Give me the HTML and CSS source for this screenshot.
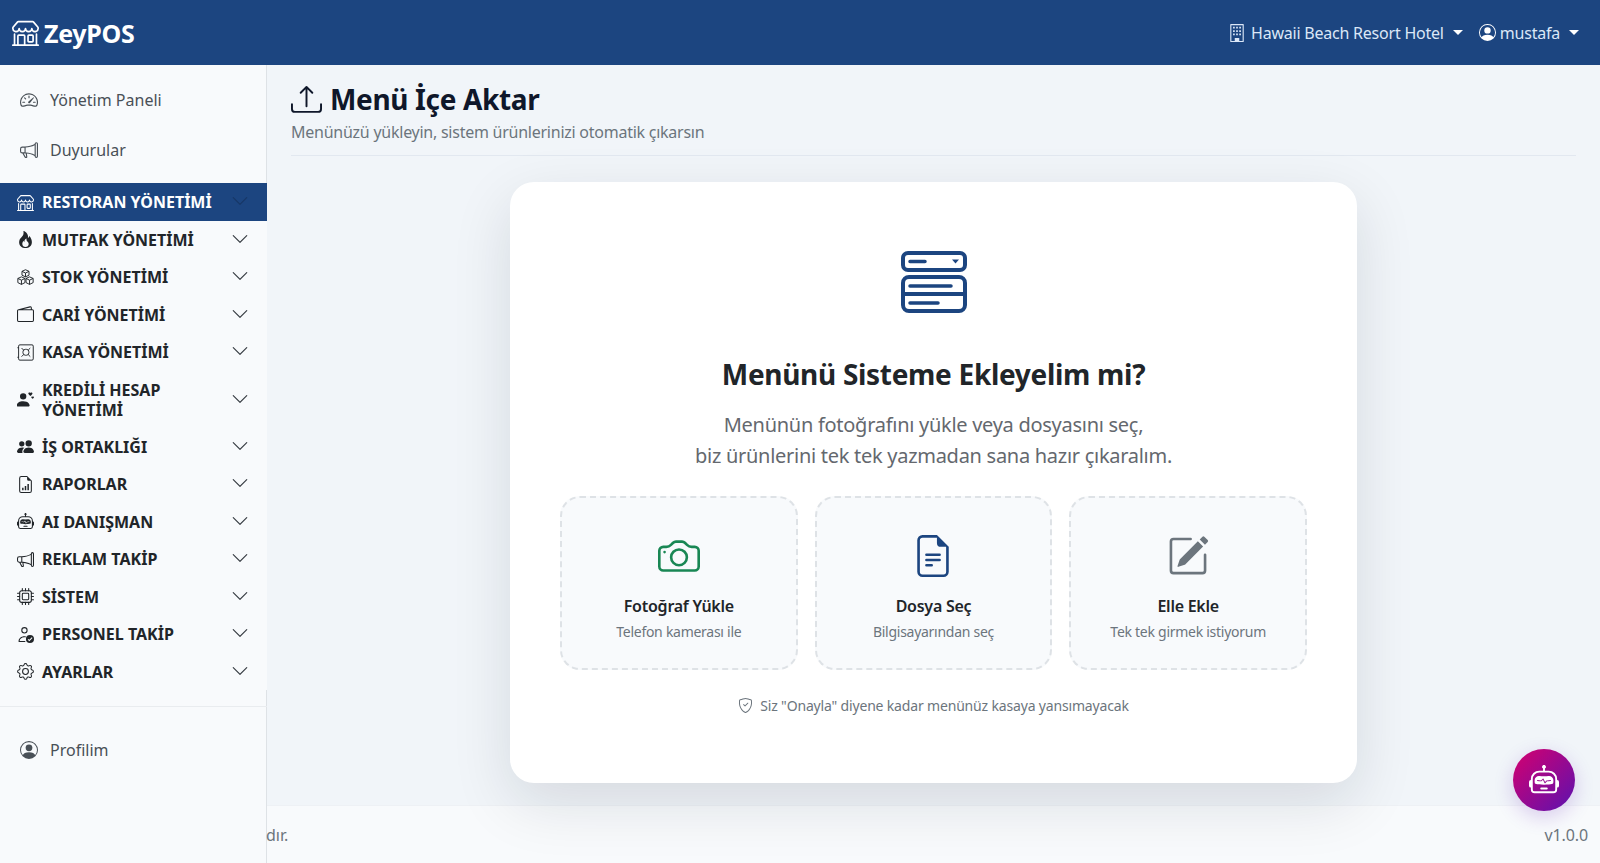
FILE: index.html
```html
<!DOCTYPE html>
<html lang="tr">
<head>
  <meta charset="UTF-8" />
  <meta name="viewport" content="width=device-width, initial-scale=1.0"/>
  <title>ZeyPOS - Menü İçe Aktar</title>
  <link rel="stylesheet" href="styles.css">
</head>
<body>
  <!-- Icon sprite -->
  <svg class="sprite" xmlns="http://www.w3.org/2000/svg">
    <symbol id="i-shop" viewBox="0 0 16 16"><path d="M2.97 1.35A1 1 0 0 1 3.73 1h8.54a1 1 0 0 1 .76.35l2.609 3.044A1.5 1.5 0 0 1 16 5.37v.255a2.375 2.375 0 0 1-4.25 1.458A2.371 2.371 0 0 1 9.875 8 2.37 2.37 0 0 1 8 7.083 2.37 2.37 0 0 1 6.125 8a2.37 2.37 0 0 1-1.875-.917A2.375 2.375 0 0 1 0 5.625V5.37a1.5 1.5 0 0 1 .361-.976l2.61-3.045zm1.78 4.275a1.375 1.375 0 0 0 2.75 0 .5.5 0 0 1 1 0 1.375 1.375 0 0 0 2.75 0 .5.5 0 0 1 1 0 1.375 1.375 0 1 0 2.75 0V5.37a.5.5 0 0 0-.12-.325L12.27 2H3.73L1.12 5.045A.5.5 0 0 0 1 5.37v.255a1.375 1.375 0 0 0 2.75 0 .5.5 0 0 1 1 0zM1.5 8.5A.5.5 0 0 1 2 9v6h1v-5a1 1 0 0 1 1-1h3a1 1 0 0 1 1 1v5h6V9a.5.5 0 0 1 1 0v6h.5a.5.5 0 0 1 0 1H.5a.5.5 0 0 1 0-1H1V9a.5.5 0 0 1 .5-.5zM4 15h3v-5H4v5zm5-5a1 1 0 0 1 1-1h2a1 1 0 0 1 1 1v3a1 1 0 0 1-1 1h-2a1 1 0 0 1-1-1v-3zm3 0h-2v3h2v-3z"/></symbol>
    <symbol id="i-speed" viewBox="0 0 16 16"><path d="M8 4a.5.5 0 0 1 .5.5V6a.5.5 0 0 1-1 0V4.5A.5.5 0 0 1 8 4zM3.732 5.732a.5.5 0 0 1 .707 0l.915.914a.5.5 0 1 1-.708.708l-.914-.915a.5.5 0 0 1 0-.707zM2 10a.5.5 0 0 1 .5-.5h1.586a.5.5 0 0 1 0 1H2.5A.5.5 0 0 1 2 10zm9.5 0a.5.5 0 0 1 .5-.5h1.5a.5.5 0 0 1 0 1H12a.5.5 0 0 1-.5-.5zm.754-4.246a.389.389 0 0 0-.527-.02L7.547 9.31a.91.91 0 1 0 1.302 1.258l3.434-4.297a.389.389 0 0 0-.029-.518z"/><path fill-rule="evenodd" d="M0 10a8 8 0 1 1 15.547 2.661c-.442 1.253-1.845 1.602-2.932 1.25C11.309 13.488 9.475 13 8 13c-1.474 0-3.31.488-4.615.911-1.087.352-2.49.003-2.932-1.25A7.988 7.988 0 0 1 0 10zm8-7a7 7 0 0 0-6.603 9.329c.203.575.923.876 1.68.63C4.397 12.533 6.358 12 8 12s3.604.532 4.923.96c.757.245 1.477-.056 1.68-.631A7 7 0 0 0 8 3z"/></symbol>
    <symbol id="i-megaphone" viewBox="0 0 16 16"><path d="M13 2.5a1.5 1.5 0 0 1 3 0v11a1.5 1.5 0 0 1-3 0v-.214c-2.162-1.241-4.49-1.843-6.912-2.083l.405 2.712A1 1 0 0 1 5.51 15.1h-.548a1 1 0 0 1-.916-.599l-1.85-3.49a68.14 68.14 0 0 0-.202-.003A2.014 2.014 0 0 1 0 9V7a2.02 2.02 0 0 1 1.992-2.013 74.663 74.663 0 0 0 2.483-.075c3.043-.154 6.148-.849 8.525-2.199V2.5zm1 0v11a.5.5 0 0 0 1 0v-11a.5.5 0 0 0-1 0zm-1 1.35c-2.344 1.205-5.209 1.842-8 2.033v4.233c.18.01.359.022.537.036 2.568.189 5.093.744 7.463 1.993V3.85zm-9 6.215v-4.13a95.09 95.09 0 0 1-1.992.052A1.02 1.02 0 0 0 1 7v2c0 .55.448 1.002 1.006 1.009A60.49 60.49 0 0 1 4 10.065zm-.657.975 1.609 3.037.01.024h.548l-.002-.014-.443-2.966a68.019 68.019 0 0 0-1.722-.082z"/></symbol>
    <symbol id="i-fire" viewBox="0 0 16 16"><path d="M8 16c3.314 0 6-2 6-5.5 0-1.5-.5-4-2.5-6 .25 1.5-1.25 2-1.25 2C11 4 9 .5 6 0c.357 2 .5 4-2 6-1.25 1-2 2.729-2 4.5C2 14 4.686 16 8 16Zm0-1c-1.657 0-3-1-3-2.75 0-.75.25-2 1.25-3C6.125 10 7 10.5 7 10.5c-.375-1.25.5-3.25 2-3.5-.179 1-.25 2 1 3 .625.5 1 1.364 1 2.25C11 14 9.657 15 8 15Z"/></symbol>
    <symbol id="i-boxes" viewBox="0 0 16 16"><g fill="none" stroke="currentColor" stroke-width=".9" stroke-linejoin="round"><path d="M8 .7l3.3 1.5v3.6L8 7.4 4.7 5.8V2.2zM4.7 2.2L8 3.8l3.3-1.6M8 3.8v3.6"/><path d="M4.2 7.4l3.3 1.5v3.9l-3.3 1.7L.8 12.8V8.9zM.8 8.9l3.4 1.6 3.3-1.6M4.2 10.5v4"/><path d="M11.8 7.4l3.4 1.5v3.9l-3.4 1.7-3.3-1.7V8.9zM8.5 8.9l3.3 1.6 3.4-1.6M11.8 10.5v4"/></g></symbol>
    <symbol id="i-wallet" viewBox="0 0 16 16"><path d="M12.136.326A1.5 1.5 0 0 1 14 1.78V3h.5A1.5 1.5 0 0 1 16 4.5v9a1.5 1.5 0 0 1-1.5 1.5h-13A1.5 1.5 0 0 1 0 13.5v-9a1.5 1.5 0 0 1 1.432-1.499L12.136.326zM5.562 3H13V1.78a.5.5 0 0 0-.621-.484L5.562 3zM1.5 4a.5.5 0 0 0-.5.5v9a.5.5 0 0 0 .5.5h13a.5.5 0 0 0 .5-.5v-9a.5.5 0 0 0-.5-.5h-13z"/></symbol>
    <symbol id="i-safe" viewBox="0 0 16 16"><g fill="none" stroke="currentColor" stroke-width=".9" stroke-linejoin="round"><rect x="1.5" y=".8" width="13.8" height="14.4" rx="1.2"/><path d="M.4 3.5h1.1M.4 12.5h1.1"/><rect x="5.6" y="5" width="5.6" height="5.6" rx="2.4"/><path d="M4.3 3.8l1.9 1.9M12.5 3.8l-1.9 1.9M4.3 11.9l1.9-1.9M12.5 11.9l-1.9-1.9"/></g></symbol>
    <symbol id="i-person-heart" viewBox="0 0 16 16"><path d="M5.8 8a3 3 0 1 0 0-6 3 3 0 0 0 0 6zM.6 14.5s-.9 0-.9-.9c0-1 1-4 6.1-4s6.1 3 6.1 4c0 .9-.9.9-.9.9z"/><path d="M12.6 1.8c.9-.9 2.4-.1 1.8 1.1-.3.6-1 1.1-1.800 1.700-.8-.6-1.500-1.100-1.800-1.700-.6-1.200.9-2 1.800-1.100zM14.700 5.400c.6-.6 1.600-.1 1.200.8-.2.400-.7.800-1.200 1.100-.5-.3-1-.7-1.200-1.100-.4-.9.6-1.400 1.200-.8z"/></symbol>
    <symbol id="i-people" viewBox="0 0 16 16"><path d="M7 14s-1 0-1-1 1-4 5-4 5 3 5 4-1 1-1 1H7Zm4-6a3 3 0 1 0 0-6 3 3 0 0 0 0 6Zm-5.784 6A2.238 2.238 0 0 1 5 13c0-1.355.68-2.75 1.936-3.72A6.325 6.325 0 0 0 5 9c-4 0-5 3-5 4s1 1 1 1h4.216ZM4.5 8a2.5 2.5 0 1 0 0-5 2.5 2.5 0 0 0 0 5Z"/></symbol>
    <symbol id="i-report" viewBox="0 0 16 16"><path fill-rule="evenodd" d="M9.5 0H4a2 2 0 0 0-2 2v12a2 2 0 0 0 2 2h8a2 2 0 0 0 2-2V4.5L9.5 0zm0 1v2A1.5 1.5 0 0 0 11 4.5h2V14a1 1 0 0 1-1 1H4a1 1 0 0 1-1-1V2a1 1 0 0 1 1-1h5.5z"/><path d="M4.8 11h1.400v2.500H4.800zM7.300 9.500h1.400v4H7.300zM9.800 7.500h1.400v6H9.800z"/></symbol>
    <symbol id="i-robot" viewBox="0 0 16 16"><path d="M6 12.5a.5.5 0 0 1 .5-.5h3a.5.5 0 0 1 0 1h-3a.5.5 0 0 1-.5-.5ZM3 8.062C3 6.76 4.235 5.765 5.53 5.886a26.58 26.58 0 0 0 4.94 0C11.765 5.765 13 6.76 13 8.062v1.157a.933.933 0 0 1-.765.935c-.845.147-2.34.346-4.235.346-1.895 0-3.39-.2-4.235-.346A.933.933 0 0 1 3 9.219V8.062Zm4.542-.827a.25.25 0 0 0-.217.068l-.92.9a24.767 24.767 0 0 1-1.871-.183.25.25 0 0 0-.068.495c.55.076 1.232.149 2.02.193a.25.25 0 0 0 .189-.071l.754-.736.847 1.71a.25.25 0 0 0 .404.062l.932-.97a25.286 25.286 0 0 0 1.922-.188.25.25 0 0 0-.068-.495c-.538.074-1.207.145-1.98.189a.25.25 0 0 0-.166.076l-.754.785-.842-1.7a.25.25 0 0 0-.182-.135Z"/><path d="M8.5 1.866a1 1 0 1 0-1 0V3h-2A4.5 4.5 0 0 0 1 7.5V8a1 1 0 0 0-1 1v2a1 1 0 0 0 1 1v1a2 2 0 0 0 2 2h10a2 2 0 0 0 2-2v-1a1 1 0 0 0 1-1V9a1 1 0 0 0-1-1v-.5A4.5 4.5 0 0 0 10.5 3h-2V1.866ZM14 7.5V13a1 1 0 0 1-1 1H3a1 1 0 0 1-1-1V7.5A3.5 3.5 0 0 1 5.5 4h5A3.5 3.5 0 0 1 14 7.5Z"/></symbol>
    <symbol id="i-cpu" viewBox="0 0 16 16"><g fill="none" stroke="currentColor"><rect x="2.5" y="2.5" width="11" height="11" rx="2"/><rect x="5" y="5" width="6" height="6" rx=".8"/><path stroke-linecap="round" d="M5 .5v2M8 .5v2M11 .5v2M5 13.5v2M8 13.5v2M11 13.5v2M.5 5h2M.5 8h2M.5 11h2M13.5 5h2M13.5 8h2M13.5 11h2"/></g></symbol>
    <symbol id="i-person-check" viewBox="0 0 16 16"><path fill-rule="evenodd" d="M7 1a3 3 0 1 1 0 6 3 3 0 0 1 0-6zm0 1a2 2 0 1 0 0 4 2 2 0 0 0 0-4zM1.5 14c0-2.2 2.3-4.4 5.5-4.4.5 0 1 .1 1.4.2l-.3 1C7.7 10.7 7.4 10.6 7 10.6c-2.7 0-4.5 1.8-4.5 3.400h5.300v1H1.500z"/><circle cx="12.2" cy="12.2" r="3.8"/><path fill="#f8fafc" d="M13.9 10.7l.7.7-3 3-1.500-1.500.7-.7.8.8z"/></symbol>
    <symbol id="i-gear" viewBox="0 0 16 16"><path d="M8 4.754a3.246 3.246 0 1 0 0 6.492 3.246 3.246 0 0 0 0-6.492zM5.754 8a2.246 2.246 0 1 1 4.492 0 2.246 2.246 0 0 1-4.492 0z"/><path fill="none" stroke="currentColor" stroke-width=".95" d="M9.3 1.49c-.38-1.29-2.22-1.29-2.6 0l-.09.32a1.37 1.37 0 0 1-1.97.81l-.29-.16c-1.18-.64-2.48.65-1.84 1.84l.16.29a1.37 1.37 0 0 1-.81 1.97l-.32.09c-1.29.38-1.29 2.22 0 2.6l.32.09a1.37 1.37 0 0 1 .81 1.97l-.16.29c-.64 1.19.65 2.48 1.84 1.84l.29-.16a1.37 1.37 0 0 1 1.97.81l.09.32c.38 1.29 2.22 1.29 2.6 0l.09-.32a1.37 1.37 0 0 1 1.97-.81l.29.16c1.19.64 2.48-.65 1.84-1.84l-.16-.29a1.37 1.37 0 0 1 .81-1.97l.32-.09c1.29-.38 1.29-2.22 0-2.6l-.32-.09a1.37 1.37 0 0 1-.81-1.97l.16-.29c.64-1.19-.65-2.48-1.84-1.84l-.29.16a1.37 1.37 0 0 1-1.97-.81z"/></symbol>
    <symbol id="i-person-circle" viewBox="0 0 16 16"><path d="M11 6a3 3 0 1 1-6 0 3 3 0 0 1 6 0z"/><path fill-rule="evenodd" d="M0 8a8 8 0 1 1 16 0A8 8 0 0 1 0 8zm8-7a7 7 0 0 0-5.468 11.37C3.242 11.226 4.805 10 8 10s4.757 1.225 5.468 2.37A7 7 0 0 0 8 1z"/></symbol>
    <symbol id="i-building" viewBox="0 0 16 16"><path fill-rule="evenodd" d="M2.5 0h11a.5.5 0 0 1 .5.5v15a.5.5 0 0 1-.5.5h-11a.5.5 0 0 1-.5-.5V.5a.5.5 0 0 1 .5-.5zM3 1v14h3v-2.5h4V15h3V1z"/><path d="M4.5 2.5H6V4H4.5zM7.25 2.5h1.5V4h-1.5zM10 2.5h1.5V4H10zM4.5 5.5H6V7H4.5zM7.25 5.5h1.5V7h-1.5zM10 5.5h1.5V7H10zM4.5 8.5H6V10H4.5zM7.25 8.5h1.5V10h-1.5zM10 8.5h1.5V10H10z"/></symbol>
    <symbol id="i-chevron" viewBox="0 0 16 16"><path fill-rule="evenodd" d="M1.646 4.646a.5.5 0 0 1 .708 0L8 10.293l5.646-5.647a.5.5 0 0 1 .708.708l-6 6a.5.5 0 0 1-.708 0l-6-6a.5.5 0 0 1 0-.708z"/></symbol>
  </svg>

  <!-- Top bar -->
  <header class="topbar">
    <a class="brand"><svg class="brand-icon"><use href="#i-shop"/></svg>ZeyPOS</a>
    <div class="topbar-right">
      <a class="top-link"><svg class="top-icon"><use href="#i-building"/></svg>Hawaii Beach Resort Hotel<span class="caret"></span></a>
      <a class="top-link"><svg class="top-icon user"><use href="#i-person-circle"/></svg>mustafa<span class="caret"></span></a>
    </div>
  </header>

  <div class="layout">
    <!-- Sidebar -->
    <aside class="sidebar">
      <a class="side-link"><svg class="side-icon"><use href="#i-speed"/></svg>Yönetim Paneli</a>
      <a class="side-link"><svg class="side-icon"><use href="#i-megaphone"/></svg>Duyurular</a>

      <nav class="side-groups">
        <a class="group active"><svg class="group-icon"><use href="#i-shop"/></svg><span>RESTORAN YÖNETİMİ</span><svg class="chevron"><use href="#i-chevron"/></svg></a>
        <a class="group"><svg class="group-icon"><use href="#i-fire"/></svg><span>MUTFAK YÖNETİMİ</span><svg class="chevron"><use href="#i-chevron"/></svg></a>
        <a class="group"><svg class="group-icon"><use href="#i-boxes"/></svg><span>STOK YÖNETİMİ</span><svg class="chevron"><use href="#i-chevron"/></svg></a>
        <a class="group"><svg class="group-icon"><use href="#i-wallet"/></svg><span>CARİ YÖNETİMİ</span><svg class="chevron"><use href="#i-chevron"/></svg></a>
        <a class="group"><svg class="group-icon"><use href="#i-safe"/></svg><span>KASA YÖNETİMİ</span><svg class="chevron"><use href="#i-chevron"/></svg></a>
        <a class="group"><svg class="group-icon"><use href="#i-person-heart"/></svg><span>KREDİLİ HESAP YÖNETİMİ</span><svg class="chevron"><use href="#i-chevron"/></svg></a>
        <a class="group"><svg class="group-icon"><use href="#i-people"/></svg><span>İŞ ORTAKLIĞI</span><svg class="chevron"><use href="#i-chevron"/></svg></a>
        <a class="group"><svg class="group-icon"><use href="#i-report"/></svg><span>RAPORLAR</span><svg class="chevron"><use href="#i-chevron"/></svg></a>
        <a class="group"><svg class="group-icon"><use href="#i-robot"/></svg><span>AI DANIŞMAN</span><svg class="chevron"><use href="#i-chevron"/></svg></a>
        <a class="group"><svg class="group-icon"><use href="#i-megaphone"/></svg><span>REKLAM TAKİP</span><svg class="chevron"><use href="#i-chevron"/></svg></a>
        <a class="group"><svg class="group-icon"><use href="#i-cpu"/></svg><span>SİSTEM</span><svg class="chevron"><use href="#i-chevron"/></svg></a>
        <a class="group"><svg class="group-icon"><use href="#i-person-check"/></svg><span>PERSONEL TAKİP</span><svg class="chevron"><use href="#i-chevron"/></svg></a>
        <a class="group"><svg class="group-icon"><use href="#i-gear"/></svg><span>AYARLAR</span><svg class="chevron"><use href="#i-chevron"/></svg></a>
      </nav>

      <div class="side-bottom">
        <a class="side-link"><svg class="side-icon"><use href="#i-person-circle"/></svg>Profilim</a>
      </div>
    </aside>

    <!-- Main content -->
    <main class="main">
      <div class="content">
        <div class="page-head">
          <h1>
            <svg class="title-icon" viewBox="0 0 16 16"><path d="M.5 9.9a.5.5 0 0 1 .5.5v2.5a1 1 0 0 0 1 1h12a1 1 0 0 0 1-1v-2.5a.5.5 0 0 1 1 0v2.5a2 2 0 0 1-2 2H2a2 2 0 0 1-2-2v-2.5a.5.5 0 0 1 .5-.5z"/><path d="M7.646 1.146a.5.5 0 0 1 .708 0l3 3a.5.5 0 0 1-.708.708L8.5 2.707V11.5a.5.5 0 0 1-1 0V2.707L5.354 4.854a.5.5 0 1 1-.708-.708l3-3z"/></svg>
            Menü İçe Aktar
          </h1>
          <p class="page-sub">Menünüzü yükleyin, sistem ürünlerinizi otomatik çıkarsın</p>
        </div>

        <section class="import-card">
          <svg class="hero-icon" viewBox="0 0 66 62">
            <rect x="2" y="2" width="62" height="17" rx="5"/>
            <rect x="2" y="26" width="62" height="34" rx="6"/>
            <path d="M2 43h62"/>
            <path class="hero-lines" d="M9 10.5h15M9 35h41M9 52h28"/>
            <path class="hero-caret" d="M51 8.5h7l-3.5 4z"/>
          </svg>
          <h2>Menünü Sisteme Ekleyelim mi?</h2>
          <p class="lead">Menünün fotoğrafını yükle veya dosyasını seç,<br>biz ürünlerini tek tek yazmadan sana hazır çıkaralım.</p>

          <div class="options">
            <a class="option">
              <svg class="option-icon green" viewBox="0 0 16 16"><path d="M15 12a1 1 0 0 1-1 1H2a1 1 0 0 1-1-1V6a1 1 0 0 1 1-1h1.172a3 3 0 0 0 2.12-.879l.83-.828A1 1 0 0 1 6.827 3h2.344a1 1 0 0 1 .707.293l.828.828A3 3 0 0 0 12.828 5H14a1 1 0 0 1 1 1v6zM2 4a2 2 0 0 0-2 2v6a2 2 0 0 0 2 2h12a2 2 0 0 0 2-2V6a2 2 0 0 0-2-2h-1.172a2 2 0 0 1-1.414-.586l-.828-.828A2 2 0 0 0 9.172 2H6.828a2 2 0 0 0-1.414.586l-.828.828A2 2 0 0 1 3.172 4H2z"/><path d="M8 11a2.5 2.5 0 1 1 0-5 2.5 2.5 0 0 1 0 5zm0 1a3.5 3.5 0 1 0 0-7 3.5 3.5 0 0 0 0 7zM3 6.5a.5.5 0 1 1-1 0 .5.5 0 0 1 1 0z"/></svg>
              <strong>Fotoğraf Yükle</strong>
              <span>Telefon kamerası ile</span>
            </a>
            <a class="option">
              <svg class="option-icon blue" viewBox="0 0 16 16"><path d="M5.5 7a.5.5 0 0 0 0 1h5a.5.5 0 0 0 0-1h-5zM5 9.5a.5.5 0 0 1 .5-.5h5a.5.5 0 0 1 0 1h-5a.5.5 0 0 1-.5-.5zm0 2a.5.5 0 0 1 .5-.5h2a.5.5 0 0 1 0 1h-2a.5.5 0 0 1-.5-.5z"/><path d="M9.5 0H4a2 2 0 0 0-2 2v12a2 2 0 0 0 2 2h8a2 2 0 0 0 2-2V4.5L9.5 0zm0 1v2A1.5 1.5 0 0 0 11 4.5h2V14a1 1 0 0 1-1 1H4a1 1 0 0 1-1-1V2a1 1 0 0 1 1-1h5.5z"/></svg>
              <strong>Dosya Seç</strong>
              <span>Bilgisayarından seç</span>
            </a>
            <a class="option">
              <svg class="option-icon gray" viewBox="0 0 16 16"><path d="M15.502 1.94a.5.5 0 0 1 0 .706L14.459 3.69l-2-2L13.502.646a.5.5 0 0 1 .707 0l1.293 1.293zm-1.75 2.456-2-2L4.939 9.21a.5.5 0 0 0-.121.196l-.805 2.414a.25.25 0 0 0 .316.316l2.414-.805a.5.5 0 0 0 .196-.12l6.813-6.814z"/><path fill-rule="evenodd" d="M1 13.5A1.5 1.5 0 0 0 2.5 15h11a1.5 1.5 0 0 0 1.5-1.5v-6a.5.5 0 0 0-1 0v6a.5.5 0 0 1-.5.5h-11a.5.5 0 0 1-.5-.5v-11a.5.5 0 0 1 .5-.5H9a.5.5 0 0 0 0-1H2.5A1.5 1.5 0 0 0 1 2.5v11z"/></svg>
              <strong>Elle Ekle</strong>
              <span>Tek tek girmek istiyorum</span>
            </a>
          </div>

          <p class="note">
            <svg class="note-icon" viewBox="0 0 16 16"><path d="M5.338 1.59a61.44 61.44 0 0 0-2.837.856.481.481 0 0 0-.328.39c-.554 4.157.726 7.19 2.253 9.188a10.725 10.725 0 0 0 2.287 2.233c.346.244.652.42.893.533.12.057.218.095.293.118a.55.55 0 0 0 .101.025.615.615 0 0 0 .1-.025c.076-.023.174-.061.294-.118.24-.113.547-.29.893-.533a10.726 10.726 0 0 0 2.287-2.233c1.527-1.997 2.807-5.031 2.253-9.188a.48.48 0 0 0-.328-.39c-.651-.213-1.75-.56-2.837-.855C9.552 1.29 8.531 1.067 8 1.067c-.53 0-1.552.223-2.662.524zM5.072.56C6.157.265 7.31 0 8 0s1.843.265 2.928.56c1.11.3 2.229.655 2.887.87a1.54 1.54 0 0 1 1.044 1.262c.596 4.477-.787 7.795-2.465 9.99a11.775 11.775 0 0 1-2.517 2.453 7.159 7.159 0 0 1-1.048.625c-.28.132-.581.24-.829.24s-.548-.108-.829-.24a7.158 7.158 0 0 1-1.048-.625 11.777 11.777 0 0 1-2.517-2.453C1.928 10.487.545 7.169 1.141 2.692A1.54 1.54 0 0 1 2.185 1.43 62.456 62.456 0 0 1 5.072.56z"/><path d="M10.854 5.146a.5.5 0 0 1 0 .708l-3 3a.5.5 0 0 1-.708 0l-1.5-1.5a.5.5 0 1 1 .708-.708L7.5 7.793l2.646-2.647a.5.5 0 0 1 .708 0z"/></svg>
            Siz "Onayla" diyene kadar menünüz kasaya yansımayacak
          </p>
        </section>
      </div>

      <footer class="footer">
        <span class="footer-cut">dır.</span>
        <span class="footer-version">v1.0.0</span>
      </footer>
    </main>
  </div>

  <!-- AI assistant button -->
  <button class="ai-btn"><svg class="ai-icon"><use href="#i-robot"/></svg></button>
</body>
</html>
```
FILE: styles.css
```css
* {
  box-sizing: border-box;
}

html, body {
  height: 100%;
}

body {
  margin: 0;
  font-family: "Noto Sans", "Open Sans", sans-serif;
  color: #212529;
  background-color: #f1f5f9;
  display: flex;
  flex-direction: column;
  overflow: hidden;
}

.sprite {
  display: none;
}

svg {
  fill: currentColor;
  flex-shrink: 0;
}

/* Top bar */
.topbar {
  height: 65px;
  background-color: #1c4580;
  color: #fff;
  display: flex;
  align-items: center;
  justify-content: space-between;
  padding: 0 21px 0 12px;
  flex-shrink: 0;
}

.brand {
  display: flex;
  align-items: center;
  gap: 5px;
  font-size: 25px;
  font-weight: 700;
  letter-spacing: -0.3px;
}

.brand-icon {
  width: 27px;
  height: 27px;
}

.topbar-right {
  display: flex;
  align-items: center;
  gap: 16px;
}

.top-link {
  display: flex;
  align-items: center;
  font-size: 16px;
  letter-spacing: -0.22px;
  color: #dbe7f7;
}

.top-icon {
  width: 18px;
  height: 18px;
  margin-right: 5px;
}

.top-icon.user {
  width: 17px;
  height: 17px;
  margin-right: 4px;
  color: #fff;
}

.caret {
  width: 0;
  height: 0;
  margin-left: 9px;
  border-top: 5px solid #fff;
  border-left: 5px solid transparent;
  border-right: 5px solid transparent;
}

/* Layout */
.layout {
  flex: 1;
  display: flex;
  min-height: 0;
}

/* Sidebar */
.sidebar {
  width: 267px;
  flex-shrink: 0;
  background-color: #f8fafc;
  border-right: 1px solid #dee2e6;
  padding-top: 10px;
}

.side-link {
  height: 50px;
  display: flex;
  align-items: center;
  padding-left: 20px;
  font-size: 16px;
  color: #495057;
}

.side-icon {
  width: 18px;
  height: 18px;
  margin-right: 12px;
}

.side-groups {
  margin-top: 8px;
  margin-right: -1px;
  background-color: #f8fafc;
  position: relative;
}

.group {
  min-height: 37.5px;
  display: flex;
  align-items: center;
  padding: 1px 18px 0 17px;
  font-size: 16px;
  font-weight: 700;
  line-height: 20px;
  color: #212529;
}

.group span {
  flex: 1;
  padding-right: 8px;
}

.group:nth-child(6) {
  min-height: 57px;
}

/* wraps onto two lines like the long group title */
.group:nth-child(6) span {
  padding-right: 50px;
}

.group.active {
  background-color: #1c4580;
  color: #fff;
}

.group.active .chevron {
  color: #173766;
}

.group-icon {
  width: 17px;
  height: 17px;
  margin-right: 8px;
}

.chevron {
  width: 18px;
  height: 18px;
  margin-bottom: 2px;
  color: #343a40;
}

.side-bottom {
  margin-top: 16px;
  padding-top: 18px;
  border-top: 1px solid #e9ecef;
  margin-right: -1px;
  position: relative;
}

/* Main */
.main {
  flex: 1;
  min-width: 0;
  display: flex;
  flex-direction: column;
}

.content {
  flex: 1;
  min-height: 0;
  padding: 16px 24px 0;
}

.page-head {
  padding-bottom: 11px;
  border-bottom: 1px solid #e2e8f0;
}

h1 {
  margin: 0;
  display: flex;
  align-items: center;
  gap: 8px;
  font-size: 28px;
  line-height: 36px;
  font-weight: 700;
  letter-spacing: -0.35px;
  color: #0f172a;
}

.title-icon {
  width: 31px;
  height: 31px;
}

.page-sub {
  margin: 3px 0 0;
  font-size: 16px;
  line-height: 24px;
  letter-spacing: -0.25px;
  color: #6c757d;
}

.import-card {
  position: relative;
  z-index: 1;
  width: 847px;
  height: 601px;
  margin: 26px auto 0;
  padding: 69px 50px 0;
  background-color: #fff;
  border-radius: 24px;
  box-shadow: 0 20px 60px rgba(15, 23, 42, 0.12);
  text-align: center;
}

.hero-icon {
  display: block;
  width: 66px;
  height: 62px;
  margin: 0 auto;
  fill: none;
  stroke: #1c4580;
  stroke-width: 4;
}

.hero-lines {
  stroke-width: 3.5;
  stroke-linecap: round;
}

.hero-caret {
  fill: #1c4580;
  stroke: none;
}

h2 {
  margin: 41px 0 0;
  font-size: 28px;
  line-height: 40px;
  font-weight: 700;
  letter-spacing: -0.3px;
  color: #212529;
}

.lead {
  margin: 14.5px 0 0;
  font-size: 20px;
  line-height: 31.5px;
  letter-spacing: -0.28px;
  color: #64686e;
}

.options {
  margin-top: 24.5px;
  display: grid;
  grid-template-columns: repeat(3, 1fr);
  gap: 17px;
}

.option {
  height: 174px;
  padding-top: 37px;
  display: flex;
  flex-direction: column;
  align-items: center;
  background-color: #f8fafc;
  border: 2px dashed #dee2e6;
  border-radius: 20px;
}

.option-icon {
  width: 42px;
  height: 42px;
}

.option-icon.green {
  color: #198754;
}

.option-icon.blue {
  color: #1c4580;
}

.option-icon.gray {
  color: #6c757d;
}

.option strong {
  margin-top: 17px;
  font-size: 16px;
  line-height: 24px;
  font-weight: 600;
  letter-spacing: -0.25px;
  color: #212529;
}

.option span {
  margin-top: 3px;
  font-size: 14px;
  line-height: 22px;
  letter-spacing: -0.27px;
  color: #6c757d;
}

.note {
  margin: 26px 0 0;
  display: flex;
  justify-content: center;
  align-items: center;
  gap: 7px;
  font-size: 14px;
  letter-spacing: -0.17px;
  color: #6c757d;
}

.note-icon {
  width: 15px;
  height: 15px;
}

.footer {
  height: 58px;
  flex-shrink: 0;
  display: flex;
  align-items: center;
  justify-content: space-between;
  padding: 0 12px 0 0;
  background-color: #f8fafc;
  border-top: 1px solid #eef1f5;
  font-size: 16px;
  color: #6c757d;
}

.footer-cut {
  margin-left: -1px;
}

.footer-version {
  letter-spacing: -0.1px;
}

/* AI button */
.ai-btn {
  position: fixed;
  right: 25px;
  bottom: 52px;
  z-index: 5;
  width: 62px;
  height: 62px;
  padding: 0;
  border: none;
  border-radius: 50%;
  color: #fff;
  background: linear-gradient(135deg, #d6006e, #5b12b0);
  box-shadow: 0 6px 20px rgba(91, 18, 176, 0.2);
  display: flex;
  align-items: center;
  justify-content: center;
}

.ai-icon {
  width: 30px;
  height: 30px;
}
```
